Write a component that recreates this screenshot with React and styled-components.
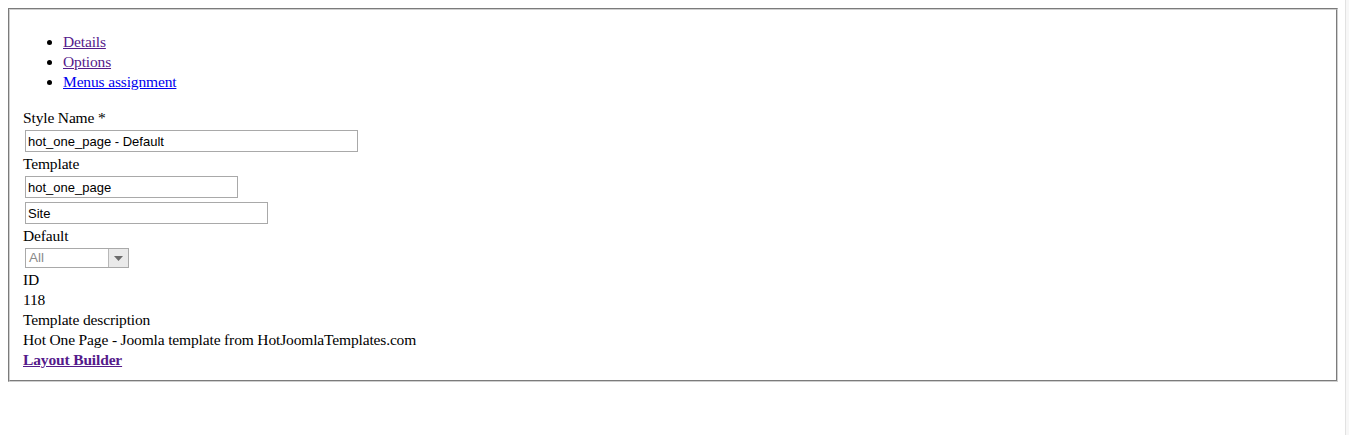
import React from "react";
import styled, { createGlobalStyle } from "styled-components";

const GlobalStyle = createGlobalStyle`
  html, body {
    margin: 0;
    padding: 0;
    background: #f7f7f7;
  }
  body {
    font-family: "Liberation Serif", "Times New Roman", serif;
    font-size: 15.5px;
    letter-spacing: -0.15px;
    line-height: 20px;
    color: #000;
  }
`;

const TABS = [
  { label: "Details", visited: true },
  { label: "Options", visited: true },
  { label: "Menus assignment", visited: false },
];

const App = () => {
  return (
    <>
      <GlobalStyle />
      <Page>
        <Fieldset>
          <TabList>
            {TABS.map((tab) => (
              <li key={tab.label}>
                <TabLink href="#" visited={tab.visited ? "yes" : "no"}>
                  {tab.label}
                </TabLink>
              </li>
            ))}
          </TabList>

          <Label>Style Name *</Label>
          <TextField width={333} defaultValue="hot_one_page - Default" />

          <Label>Template</Label>
          <TextField width={213} defaultValue="hot_one_page" />
          <TextField width={243} defaultValue="Site" />

          <Label>Default</Label>
          <FakeSelect>
            <FakeSelectValue>All</FakeSelectValue>
            <FakeSelectArrow>
              <svg width="9" height="5" viewBox="0 0 9 5">
                <path d="M0 0 H9 L4.5 5 Z" fill="#6b6b6b" />
              </svg>
            </FakeSelectArrow>
          </FakeSelect>

          <Label>ID</Label>
          <Text>118</Text>

          <Label>Template description</Label>
          <Text>Hot One Page - Joomla template from HotJoomlaTemplates.com</Text>

          <BoldLink href="#">Layout Builder</BoldLink>
        </Fieldset>
      </Page>
    </>
  );
};

const Page = styled.div`
  box-sizing: border-box;
  width: 1346px;
  min-height: 435px;
  padding: 8px 8px 8px 8px;
  background: #fff;
  border-right: 1px solid #e2e2e2;
`;

const Fieldset = styled.div`
  display: flex;
  flex-direction: column;
  align-items: flex-start;
  margin-right: -1px;
  padding: 6px 12px 10px 13px;
  border: 2px groove #cfcfcf;
`;

const TabList = styled.ul`
  margin: 16px 0;
  padding-left: 40px;
  list-style: disc;
`;

const TabLink = styled.a`
  color: ${(props) => (props.visited === "yes" ? "#551a8b" : "#0000ee")};
  text-decoration: underline;
`;

const Label = styled.div`
  height: 20px;
`;

const Text = styled.div`
  height: 20px;
`;

const TextField = styled.input`
  box-sizing: border-box;
  width: ${(props) => props.width}px;
  height: 22px;
  margin: 2px;
  padding: 1px 2px;
  border: 1px solid #a9a9a9;
  font-family: "Liberation Sans", Arial, sans-serif;
  font-size: 13px;
  letter-spacing: 0;
  color: #000;
  background: #fff;
  outline: none;
`;

const FakeSelect = styled.div`
  display: flex;
  box-sizing: border-box;
  width: 104px;
  height: 20px;
  margin: 2px;
  border: 1px solid #a9a9a9;
  background: #fff;
`;

const FakeSelectValue = styled.span`
  flex: 1;
  padding-left: 3px;
  font-family: "Liberation Sans", Arial, sans-serif;
  font-size: 13.5px;
  letter-spacing: 0;
  line-height: 18px;
  color: #8a8a8a;
`;

const FakeSelectArrow = styled.span`
  display: flex;
  align-items: center;
  justify-content: center;
  width: 19px;
  background: #eaeaea;
  border-left: 1px solid #b8b8b8;
`;

const BoldLink = styled.a`
  display: block;
  height: 20px;
  font-weight: bold;
  color: #551a8b;
  text-decoration: underline;
`;

export default App;
